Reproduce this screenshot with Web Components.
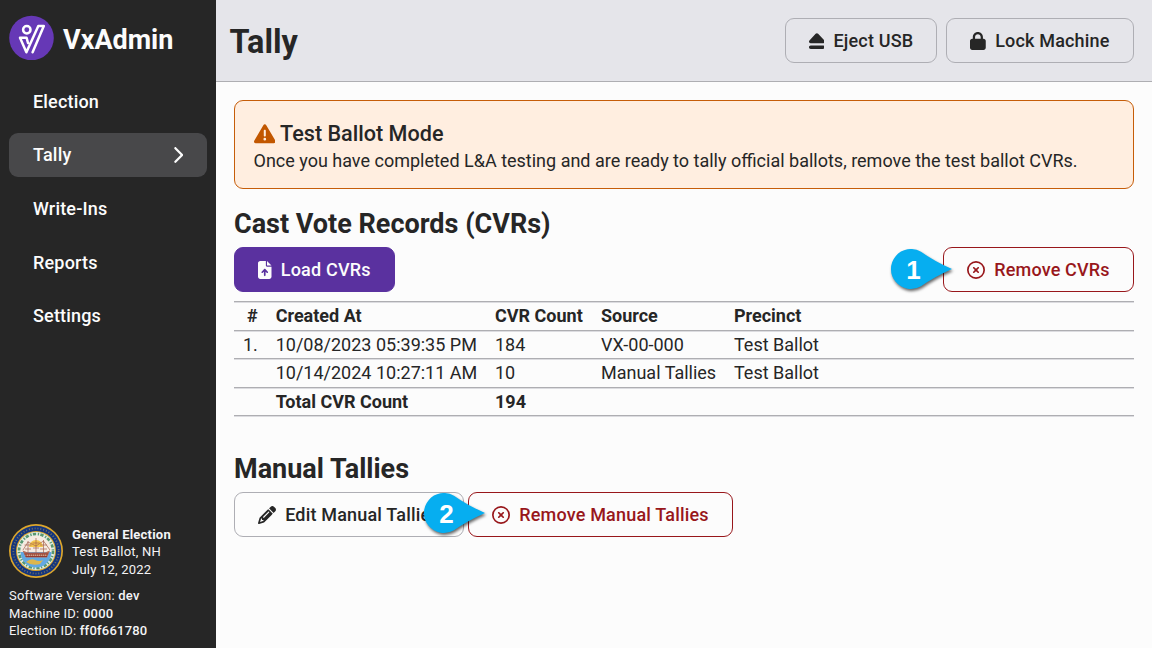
<!DOCTYPE html>
<html lang="en"><head><meta charset="utf-8"><title>VxAdmin</title>
<style>
html,body{margin:0;height:100%}
body{font-family:Roboto,sans-serif;font-size:18px;line-height:1.2;color:#262626;background:#fcfcfc;overflow:hidden}
</style></head><body>
<vx-app></vx-app>
<script>
const define=(name,html,after)=>{
  const t=document.createElement('template');t.innerHTML=html;
  customElements.define(name,class extends HTMLElement{
    constructor(){super();this.attachShadow({mode:'open'}).append(t.content.cloneNode(true));}
    connectedCallback(){after&&after.call(this);}
  });
};

const ICONS={
eject:[448,'M224 32c13.5 0 26.3 5.6 35.4 15.6l176 192c12.9 14 16.2 34.3 8.6 51.8S419 320 400 320H48c-19 0-36.3-11.2-43.9-28.7s-4.3-37.7 8.6-51.8l176-192C197.7 37.6 210.5 32 224 32zM0 432c0-26.5 21.5-48 48-48H400c26.5 0 48 21.5 48 48s-21.5 48-48 48H48c-26.5 0-48-21.5-48-48z'],
lock:[448,'M144 144v48H304V144c0-44.2-35.8-80-80-80s-80 35.8-80 80zM80 192V144C80 64.5 144.5 0 224 0s144 64.5 144 144v48h16c35.3 0 64 28.7 64 64V448c0 35.3-28.7 64-64 64H64c-35.3 0-64-28.7-64-64V256c0-35.3 28.7-64 64-64H80z'],
warning:[512,'M256 32c14.2 0 27.3 7.5 34.5 19.8l216 368c7.3 12.4 7.3 27.7 .2 40.1S486.3 480 472 480H40c-14.3 0-27.6-7.7-34.7-20.1s-7-27.8 .2-40.1l216-368C228.7 39.5 241.8 32 256 32zm0 128c-13.3 0-24 10.7-24 24V296c0 13.3 10.7 24 24 24s24-10.7 24-24V184c0-13.3-10.7-24-24-24zm32 224a32 32 0 1 0 -64 0 32 32 0 1 0 64 0z'],
remove:[512,'M256 48a208 208 0 1 1 0 416 208 208 0 1 1 0-416zm0 464A256 256 0 1 0 256 0a256 256 0 1 0 0 512zM175 175c-9.4 9.4-9.4 24.6 0 33.9l47 47-47 47c-9.4 9.4-9.4 24.6 0 33.9s24.6 9.4 33.9 0l47-47 47 47c9.4 9.4 24.6 9.4 33.9 0s9.4-24.6 0-33.9l-47-47 47-47c9.4-9.4 9.4-24.6 0-33.9s-24.6-9.4-33.9 0l-47 47-47-47c-9.4-9.4-24.6-9.4-33.9 0z'],
file:[384,'M64 0C28.7 0 0 28.7 0 64V448c0 35.3 28.7 64 64 64H320c35.3 0 64-28.7 64-64V160H256c-17.7 0-32-14.3-32-32V0H64zM256 0V128H384L256 0zM216 408c0 13.3-10.7 24-24 24s-24-10.7-24-24V305.9l-31 31c-9.4 9.4-24.6 9.4-33.9 0s-9.4-24.6 0-33.9l72-72c9.4-9.4 24.6-9.4 33.9 0l72 72c9.4 9.4 9.4 24.6 0 33.9s-24.6 9.4-33.9 0l-31-31V408z'],
pencil:[512,'M410.3 231l11.3-11.3-33.9-33.9-62.1-62.1L291.7 89.8l-11.3 11.3-22.6 22.6L58.6 322.9c-10.4 10.4-18 23.3-22.2 37.4L1 480.7c-2.5 8.4-.2 17.5 6.1 23.7s15.3 8.5 23.7 6.1l120.3-35.4c14.1-4.2 27-11.8 37.4-22.2L387.7 253.7 410.3 231zM160 399.4l-9.1 22.7c-4 3.1-8.5 5.4-13.3 6.9L59.4 452l23-78.1c1.4-4.9 3.8-9.4 6.9-13.3l22.7-9.1v32c0 8.8 7.2 16 16 16h32zM362.7 18.7L348.3 33.2 325.7 55.8 314.3 67.1l33.9 33.9 62.1 62.1 33.9 33.9 11.3-11.3 22.6-22.6 14.5-14.5c25-25 25-65.5 0-90.5L453.3 18.7c-25-25-65.5-25-90.5 0zm-47.4 168l-144 144c-6.2 6.2-16.4 6.2-22.6 0s-6.2-16.4 0-22.6l144-144c6.2-6.2 16.4-6.2 22.6 0s6.2 16.4 0 22.6z'],
chevron:[320,'M310.6 233.4c12.5 12.5 12.5 32.8 0 45.3l-192 192c-12.5 12.5-32.8 12.5-45.3 0s-12.5-32.8 0-45.3L242.7 256 73.4 86.6c-12.5-12.5-12.5-32.8 0-45.3s32.8-12.5 45.3 0l192 192z']};

define('vx-icon',`<style>:host{display:inline-flex;flex:none}svg{display:block;height:1em;fill:currentColor}</style><svg><path/></svg>`,function(){
  const icon=ICONS[this.getAttribute('name')];
  if(!icon)return;
  const [w,d]=icon,s=this.shadowRoot.querySelector('svg');
  s.setAttribute('viewBox',`0 0 ${w} 512`);s.style.width=w/512+'em';s.firstChild.setAttribute('d',d);
});

define('vx-logo',`<style>:host{display:block;width:45px;height:45px}svg{display:block}</style>
<svg width="45" height="45" viewBox="0 0 45 45"><circle cx="22.500" cy="23" r="22.300" fill="#6638b6"/>
<g fill="none" stroke="#fff" stroke-width="2.5" stroke-linejoin="round" stroke-linecap="round"><circle cx="17.800" cy="14.800" r="3.700"/><path d="M19 28L17.600 22.800H11L17.400 37.300L29.300 11H34.800L23.600 37.300"/></g></svg>`);

define('vx-seal',`<style>:host{display:block;width:54px;height:54px}svg{display:block}</style>
<svg width="54" height="54" viewBox="0 0 54 54">
<circle cx="27" cy="27" r="27" fill="#dca62c"/><circle cx="27" cy="27" r="25.300" fill="#14357e"/>
<circle cx="27" cy="27" r="22.600" fill="none" stroke="#b79a4a" stroke-width="1.800" stroke-dasharray="1 1.900" opacity=".6"/>
<circle cx="27" cy="27" r="20" fill="#dca62c"/><circle cx="27" cy="27" r="19" fill="#dfeae2"/>
<circle cx="27" cy="27" r="16.900" fill="none" stroke="#3f8a5c" stroke-width="2.800" stroke-dasharray="3.200 1.800 1.200 1.400" opacity=".85"/>
<circle cx="27" cy="27" r="15.400" fill="#f5ebe2"/>
<path d="M20 23a7 7 0 0 1 14 0z" fill="#f4c84e"/>
<path d="M11.600 28H42.400A15.400 15.400 0 0 1 11.600 28z" fill="#62a8e2"/>
<path d="M17 38q5-4 9-2t8 0l-3 4q-8 2-14-2z" fill="#ddb64c"/>
<path d="M13.500 26.500L19 28.500H36L41 26.500L38 33.500H17z" fill="#b06a58"/>
<path d="M15.500 30H39M16.500 32.500H38" stroke="#943a30" stroke-width="1.100"/>
<path d="M18 31.200H37" stroke="#f2dcb4" stroke-width=".7" stroke-dasharray="1 1"/>
<path d="M19 17V29M27 14V29M34.500 16V29M14 26L19 18L27 22L34.500 17L41 26M15.500 21H22.500M23.500 19H30.500M31 21H38M16 25H22M24 24H30M31 25H38" stroke="#a3604e" stroke-width=".7" fill="none"/>
</svg>`);

define('vx-button',`<style>
:host{display:inline-flex;box-sizing:border-box;height:45px;align-items:center;justify-content:center;gap:9px;border:1.2px solid #aeaeb4;border-radius:9px;font-weight:500;letter-spacing:.18px;white-space:nowrap}
:host([variant=primary]){background:#5a319f;border-color:#5a319f;color:#fcfcfc}
:host([variant=danger]){border-color:#98171b;color:#98171b;background:#fcfcfc}
vx-icon{font-size:18px}
</style><span><slot></slot></span>`,function(){
  const i=document.createElement('vx-icon');i.setAttribute('name',this.getAttribute('icon'));
  this.shadowRoot.querySelector('span').before(i);});

define('vx-nav-item',`<style>
:host{display:flex;box-sizing:border-box;height:44.600px;padding:0 24px;align-items:center;justify-content:space-between;border-radius:9px;font-weight:500;letter-spacing:.18px;color:#fcfcfc}
:host([active]){background:#48484a}
vx-icon{display:none;font-size:18px}:host([active]) vx-icon{display:flex}
</style><span><slot></slot></span><vx-icon name="chevron"></vx-icon>`);

define('vx-sidebar',`<style>
:host{display:flex;flex-direction:column;box-sizing:border-box;width:216px;height:648px;padding:15px 9px 8px;background:#262626;color:#f4f4f6}
header{display:flex;align-items:center;gap:9px;height:45px}
h1{margin:5px 0 0;font-size:27px;line-height:32px;font-weight:700;color:#fcfcfc}
nav{display:flex;flex-direction:column;gap:9px;margin-top:19.300px;flex:1}
.meta{font-size:13px;line-height:17.600px;letter-spacing:.22px}
.election{display:flex;align-items:center;gap:9px;margin-bottom:9px;line-height:17.400px}
.election>div{padding-top:1.500px}
b{font-weight:700}.machine b{font-weight:500}
</style>
<header><vx-logo></vx-logo><h1>VxAdmin</h1></header>
<nav><slot></slot></nav>
<div class="meta election"><vx-seal></vx-seal><div><b>General Election</b><div>Test Ballot, NH</div><div>July 12, 2022</div></div></div>
<div class="meta machine"><div>Software Version: <b>dev</b></div><div>Machine ID: <b>0000</b></div><div>Election ID: <b>ff0f661780</b></div></div>`);

define('vx-header',`<style>
:host{display:flex;box-sizing:border-box;height:82px;padding:0 18px 0 13.400px;align-items:center;justify-content:space-between;background:#e5e5ea;border-bottom:1px solid #aeaeb2}
h1{margin:2px 0 0;font-size:32.400px;line-height:40px;font-weight:700}
div{display:flex;gap:9px}
</style><h1><slot name="title"></slot></h1><div><slot></slot></div>`);

define('vx-warning',`<style>
:host{display:block;box-sizing:border-box;height:89px;padding:20px 18.500px 0;border:1.200px solid #c65d09;border-radius:9px;background:#ffeee0}
h3{display:flex;align-items:center;gap:5px;margin:0;font-size:21.600px;line-height:26px;font-weight:500}
vx-icon{color:#c25700;margin-top:-1px}
p{margin:2px 0 0;line-height:24px;white-space:nowrap}
</style><h3><vx-icon name="warning"></vx-icon><span><slot name="title"></slot></span></h3><p><slot></slot></p>`);

define('vx-table',`<style>
:host{display:block}
table{width:100%;border-collapse:separate;border-spacing:0;table-layout:fixed;white-space:nowrap;box-shadow:0 1px 0 #dcdce0}
td,th{box-sizing:border-box;height:28.600px;padding:0 9px;text-align:left;border-top:1px solid #aeaeb2;box-shadow:inset 0 1px 0 #dcdce0}
tr:last-child th{height:29.600px;border-bottom:1px solid #aeaeb2}
th{font-weight:700}
td:first-child,th:first-child{text-align:right}
</style><table>
<colgroup><col style="width:32.700px"><col style="width:219.300px"><col style="width:106px"><col style="width:133px"><col></colgroup>
<tr><th>#</th><th>Created At</th><th>CVR Count</th><th>Source</th><th>Precinct</th></tr>
<tr><td>1.</td><td>10/08/2023 05:39:35 PM</td><td>184</td><td>VX-00-000</td><td>Test Ballot</td></tr>
<tr><td></td><td>10/14/2024 10:27:11 AM</td><td>10</td><td>Manual Tallies</td><td>Test Ballot</td></tr>
<tr><th></th><th>Total CVR Count</th><th>194</th><th></th><th></th></tr></table>`);

define('vx-callout',`<style>
:host{position:absolute;display:block;width:61px;height:40px;top:2px;pointer-events:none}
svg{display:block;overflow:visible;filter:drop-shadow(1px 2px 1.500px rgba(0,0,0,.6))}
span{position:absolute;left:1px;top:0;width:43px;text-align:center;font:700 26px/42px "Liberation Sans",sans-serif;color:#fff}
</style><svg width="61" height="40" viewBox="0 0 61 40"><path d="M30 2.700A20 20 0 1 0 30 37.300Q43 28 61 20Q43 12 30 2.700z" fill="#06aef0"/></svg><span><slot></slot></span>`);

define('vx-app',`<style>
:host{display:flex;width:1152px;height:648px}
main{flex:1;min-width:0}
.content{padding:18px 18px 0}
h2{margin:0;font-size:27px;line-height:32px;font-weight:700}
.row{display:flex;position:relative;height:45px}
.between{justify-content:space-between}
</style>
<vx-sidebar><vx-nav-item>Election</vx-nav-item><vx-nav-item active>Tally</vx-nav-item><vx-nav-item>Write-Ins</vx-nav-item><vx-nav-item>Reports</vx-nav-item><vx-nav-item>Settings</vx-nav-item></vx-sidebar>
<main>
<vx-header><span slot="title">Tally</span><vx-button icon="eject" style="width:152px">Eject USB</vx-button><vx-button icon="lock" style="width:188px">Lock Machine</vx-button></vx-header>
<div class="content">
<vx-warning><span slot="title">Test Ballot Mode</span>Once you have completed L&amp;A testing and are ready to tally official ballots, remove the test ballot CVRs.</vx-warning>
<h2 style="margin-top:19px;margin-bottom:7px">Cast Vote Records (CVRs)</h2>
<div class="row between"><vx-button variant="primary" icon="file" style="width:161px">Load CVRs</vx-button><vx-button variant="danger" icon="remove" style="width:191px">Remove CVRs</vx-button><vx-callout style="left:657px">1</vx-callout></div>
<vx-table style="margin-top:9px"></vx-table>
<h2 style="margin-top:37px;margin-bottom:7px">Manual Tallies</h2>
<div class="row" style="gap:4px"><vx-button icon="pencil" style="width:230px">Edit Manual Tallies</vx-button><vx-button variant="danger" icon="remove" style="width:265px">Remove Manual Tallies</vx-button><vx-callout style="left:190px;top:1px">2</vx-callout></div>
</div></main>`);
</script></body></html>
